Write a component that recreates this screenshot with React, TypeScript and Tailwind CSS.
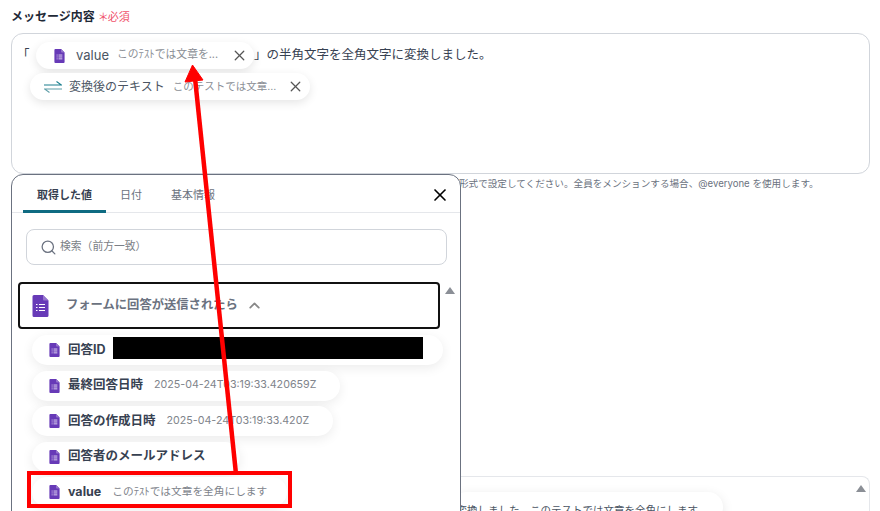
import { ChevronUp, Search, X } from 'lucide-react';

const font = { fontFamily: 'Inter, "Noto Sans CJK JP", sans-serif' };

function FormsIcon({ className }: { className: string }) {
  return (
    <svg viewBox="0 0 16 22" className={className}>
      <path d="M1.5 0H10.5L16 5.5V20.5A1.5 1.5 0 0 1 14.500 22H1.500A1.500 1.500 0 0 1 0 20.500V1.500A1.500 1.500 0 0 1 1.500 0Z" fill="#673ab7" />
      <path d="M10.5 0L16 5.5H11.500A1 1 0 0 1 10.500 4.500Z" fill="#9575cd" />
      <path d="M6.500 9.500H12.500M6.500 12.500H12.500M6.500 15.500H12.500M3.500 9.500H5M3.500 12.500H5M3.500 15.500H5" stroke="#fff" strokeWidth="1.200" />
    </svg>
  );
}

function SwapIcon() {
  return (
    <svg viewBox="0 0 18 12" className="h-[12px] w-[18px] shrink-0" fill="none" strokeWidth="1.100">
      <path d="M0 4H17.500L12.500 0.500" stroke="#1b7f8e" />
      <path d="M18 8H0.500L5.500 11.500" stroke="#5f9ea8" />
    </svg>
  );
}

function InlineChip({ className, icon, name, nameClass, value, valueClass }: { className: string; icon: React.ReactNode; name: string; nameClass: string; value: string; valueClass: string }) {
  return (
    <span className={`inline-flex h-[27px] items-center rounded-full bg-white align-middle shadow-[0_3px_10px_rgba(0,0,0,0.1)] ${className}`}>
      {icon}
      <span className={`whitespace-nowrap text-[#4b5563] ${nameClass}`}>{name}</span>
      <span className={`ml-[8px] whitespace-nowrap text-[#8b8f96] ${valueClass}`}>{value}</span>
      <X className="ml-auto h-[17px] w-[17px] shrink-0 text-[#555]" strokeWidth={1.800} />
    </span>
  );
}

function ValueChip({ className, name, value }: { className: string; name: string; value?: string }) {
  return (
    <div className={`flex h-[30px] shrink-0 items-center rounded-full bg-white pl-[17px] shadow-[0_3px_12px_rgba(0,0,0,0.08)] ${className}`}>
      <FormsIcon className="h-[14px] w-[11px] shrink-0" />
      <span className="ml-[8px] whitespace-nowrap text-[12.500px] font-bold text-[#374151]">{name}</span>
      {value && <span className="ml-[11px] whitespace-nowrap text-[10.700px] text-[#80848b]">{value}</span>}
    </div>
  );
}

function Popover() {
  return (
    <div className="absolute left-[11px] top-[174px] h-[350px] w-[450px] rounded-t-[12px] border border-[#6b7280] bg-white">
      <div className="relative flex h-[38px] items-start border-b border-[#e5e7eb] px-[11px]">
        <div className="flex h-[38px] w-[83px] justify-center border-b-[3px] border-[#0f6b82] pt-[12px] text-[11px] font-bold text-[#374151]">取得した値</div>
        <div className="ml-[14px] pt-[12px] text-[11px] text-[#6b7280]">日付</div>
        <div className="ml-[29px] pt-[12px] text-[11px] text-[#6b7280]">基本情報</div>
        <X className="absolute right-[10px] top-[10px] h-[20px] w-[20px] text-black" strokeWidth={2} />
      </div>
      <div className="ml-[14px] mt-[16px] flex h-[36px] w-[421px] items-center rounded-[8px] border border-[#d1d5db] pl-[13px]">
        <Search className="h-[17px] w-[17px] text-[#6b7280]" strokeWidth={1.800} />
        <span className="ml-[3px] text-[10.800px] text-[#7b7f86]">検索（前方一致）</span>
      </div>
      <div className="relative ml-[6px] mt-[17px] flex w-[433px] flex-col">
        <div className="ml-0 flex h-[47px] w-[422px] items-center rounded-[4px] border-2 border-[#111] pl-[12px]">
          <FormsIcon className="h-[22px] w-[17px] shrink-0" />
          <span className="ml-[17px] text-[12.300px] font-bold text-[#6b7280]">フォームに回答が送信されたら</span>
          <ChevronUp className="ml-[8px] h-[17px] w-[17px] text-[#888]" strokeWidth={2.500} />
        </div>
        <div className="absolute right-[-4px] top-[5px] h-0 w-0 border-x-[5px] border-b-[7px] border-x-transparent border-b-[#8b8f96]" />
        <div className="ml-[14px] mt-[6px] flex flex-col gap-[5.500px]">
          <ValueChip className="w-[411px]" name="回答ID" />
          <ValueChip className="w-[308px]" name="最終回答日時" value="2025-04-24T03:19:33.420659Z" />
          <ValueChip className="w-[301px]" name="回答の作成日時" value="2025-04-24T03:19:33.420Z" />
          <ValueChip className="w-[208px]" name="回答者のメールアドレス" />
          <ValueChip className="w-[255px]" name="value" value="このﾃｽﾄでは文章を全角にします" />
        </div>
        {/* redacted id */}
        <div className="absolute left-[95px] top-[55px] h-[22px] w-[310px] bg-black" />
        {/* highlight round the value row */}
        <div className="absolute left-[9px] top-[189px] h-[37px] w-[265px] border-[4px] border-[#ff0000]" />
      </div>
    </div>
  );
}

export default function App() {
  return (
    <div className="relative h-[511px] w-[880px] overflow-hidden bg-white px-[11px] pt-[9px]" style={font}>
      <div className="flex h-[16px] items-center text-[12px] font-bold text-[#1f2937]">
        メッセージ内容
        <span className="ml-[3px] text-[11px] font-normal text-[#f0526b]">＊</span>
        <span className="ml-[-1px] text-[11px] font-normal text-[#f0526b]">必須</span>
      </div>
      <div className="mt-[8px] h-[141px] w-[859px] rounded-[12px] border border-[#d1d5db] pl-[5px] pt-[8px]">
        <div className="flex h-[27px] items-center text-[12.500px] text-[#374151]">
          <span className="w-[19px]">「</span>
          <InlineChip
            className="w-[218px] pl-[18px] pr-[6px]"
            icon={<FormsIcon className="h-[14px] w-[11px] shrink-0" />}
            name="value"
            nameClass="ml-[11px] text-[13px]"
            value="このﾃｽﾄでは文章を..."
            valueClass="text-[10.800px]"
          />
          <span className="whitespace-nowrap">」の半角文字を全角文字に変換しました。</span>
        </div>
        <div className="mt-[4px] flex">
          <InlineChip
            className="ml-[13px] w-[280px] pl-[14px] pr-[6px]"
            icon={<SwapIcon />}
            name="変換後のテキスト"
            nameClass="ml-[7px] text-[12px]"
            value="このテストでは文章..."
            valueClass="text-[10.500px]"
          />
        </div>
      </div>
      <p className="mt-[3px] h-[14px] whitespace-nowrap pl-[448px] text-[9.600px] leading-[14px] text-[#6b7280]">
        形式で設定してください。全員をメンションする場合、@everyone を使用します。
      </p>
      <div className="relative ml-[440px] mt-[285px] h-[60px] w-[419px] rounded-t-[8px] border border-b-0 border-[#e5e7eb] pt-[15px]">
        <div className="absolute right-[3px] top-[8px] h-0 w-0 border-x-[5px] border-b-[7px] border-x-transparent border-b-[#8b8f96]" />
        <div className="flex h-[30px] w-[271px] items-end justify-end rounded-full bg-white pb-[3px] pr-[25px] shadow-[0_3px_12px_rgba(0,0,0,0.1)]">
          <span className="whitespace-nowrap text-[10.500px] text-[#4b5563]">変換しました。このテストでは文章を全角にします</span>
        </div>
      </div>
      <Popover />
      <svg className="pointer-events-none absolute left-0 top-0" width="880" height="511" viewBox="0 0 880 511">
        <path d="M236 474L195 78" stroke="#ff0000" strokeWidth="4.500" fill="none" />
        <path d="M192.500 65L185 82L203 80Z" fill="#ff0000" stroke="#ff0000" strokeWidth="1" />
      </svg>
    </div>
  );
}
